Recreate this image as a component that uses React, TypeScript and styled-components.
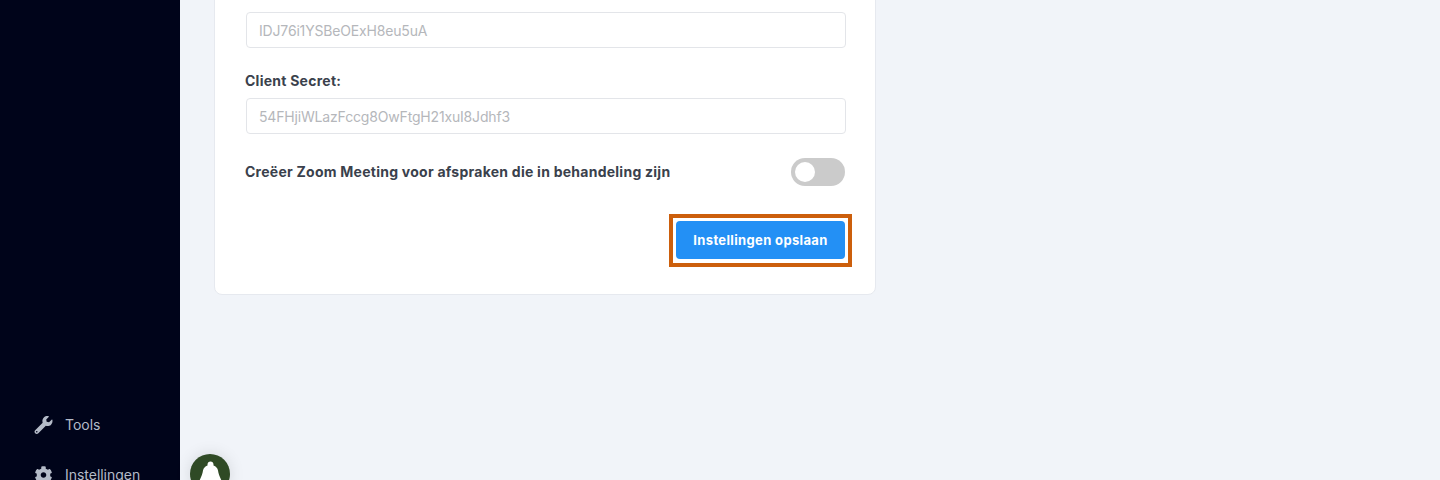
import React from "react";
import styled, { createGlobalStyle } from "styled-components";
import { FaWrench, FaCog } from "react-icons/fa";

const App: React.FC = () => {
  return (
    <Page>
      <GlobalStyle />
      <Sidebar>
        <NavItem>
          <FaWrench size={18} />
          <span>Tools</span>
        </NavItem>
        <NavItem>
          <FaCog size={18} />
          <span>Instellingen</span>
        </NavItem>
      </Sidebar>
      <Main>
        <Card>
          <Field>
            <Label>Client ID:</Label>
            <Input readOnly placeholder="IDJ76i1YSBeOExH8eu5uA" />
          </Field>
          <Field>
            <Label>Client Secret:</Label>
            <Input readOnly placeholder="54FHjiWLazFccg8OwFtgH21xuI8Jdhf3" />
          </Field>
          <ToggleRow>
            <Label as="span">Creëer Zoom Meeting voor afspraken die in behandeling zijn</Label>
            <Toggle>
              <Knob />
            </Toggle>
          </ToggleRow>
          <Actions>
            <Highlight>
              <SaveButton>Instellingen opslaan</SaveButton>
            </Highlight>
          </Actions>
        </Card>
      </Main>
      <BellBadge>
        <svg width="40" height="40" viewBox="0 0 40 40" fill="#fff">
          <path d="M20.5 7.5c1.7 0 3 1.3 3 3v1c2.5 1 4 2.5 4.5 5 .5 3 1.5 6 3.5 10l2.5 4H7l2.5-4c2-4 3-7 3.5-10 .5-2.5 2-4 4.5-5v-1c0-1.7 1.3-3 3-3z" />
        </svg>
      </BellBadge>
    </Page>
  );
};

// Styled Components
const GlobalStyle = createGlobalStyle`
  html, body {
    margin: 0;
    height: 480px;
    overflow: hidden;
    background: #f1f4f9;
    font-family: Inter, "Liberation Sans", sans-serif;
  }
  * {
    box-sizing: border-box;
  }
`;

const Page = styled.div`
  display: flex;
  height: 480px;
  overflow: hidden;
  position: relative;
`;

const Sidebar = styled.aside`
  width: 180px;
  flex-shrink: 0;
  height: 480px;
  background: #00041a;
  display: flex;
  flex-direction: column;
  padding: 415px 0 0 34px;
  gap: 30px;
`;

const NavItem = styled.div`
  display: flex;
  align-items: center;
  gap: 12px;
  height: 20px;
  flex-shrink: 0;
  font-size: 14px;
  letter-spacing: -0.03px;
  color: #b4bbc8;
  span {
    margin-top: -2px;
  }
  svg {
    color: #b4bbc8;
    flex-shrink: 0;
    width: 19px;
  }
`;

const Main = styled.main`
  flex: 1;
  padding-left: 34px;
`;

const Card = styled.div`
  width: 662px;
  margin-top: -16px;
  background: #fff;
  border: 1px solid #e6e9ef;
  border-radius: 8px;
  padding: 0 30px 27px;
  display: flex;
  flex-direction: column;
`;

const Field = styled.div`
  display: flex;
  flex-direction: column;
  gap: 7px;
  margin-bottom: 23px;
`;

const Label = styled.label`
  font-size: 14px;
  line-height: 20px;
  font-weight: 700;
  letter-spacing: 0.25px;
  color: #3a414c;
`;

const Input = styled.input`
  width: 600px;
  height: 36px;
  flex-shrink: 0;
  margin-left: 1px;
  padding: 0 12px;
  font: 14px Inter, "Liberation Sans", sans-serif;
  letter-spacing: -0.17px;
  background: #fff;
  border: 1px solid #e3e5e9;
  border-radius: 4px;
  outline: none;
  &::placeholder {
    color: #b5b7bb;
  }
`;

const ToggleRow = styled.div`
  display: flex;
  align-items: center;
  justify-content: space-between;
  height: 28px;
  margin-top: 1px;
`;

const Toggle = styled.div`
  width: 54px;
  height: 28px;
  border-radius: 14px;
  background: #cbcbcb;
  padding: 4px;
  flex-shrink: 0;
`;

const Knob = styled.div`
  width: 20px;
  height: 20px;
  border-radius: 50%;
  background: #fff;
`;

const Actions = styled.div`
  display: flex;
  justify-content: flex-end;
  margin-top: 28px;
  margin-right: -7px;
`;

const Highlight = styled.div`
  border: 4px solid #cc5f0c;
  padding: 3px 3px 4px;
`;

const SaveButton = styled.button`
  display: block;
  width: 169px;
  height: 38px;
  padding: 0;
  border: none;
  border-radius: 4px;
  background: #2390f5;
  color: #fff;
  font: 700 13px Inter, "Liberation Sans", sans-serif;
  letter-spacing: 0.35px;
`;

const BellBadge = styled.div`
  position: absolute;
  left: 190px;
  top: 454px;
  width: 40px;
  height: 40px;
  border-radius: 50%;
  background: #2f4a25;
  box-shadow: 0 0 16px rgba(0, 0, 0, 0.12);
  svg {
    display: block;
  }
`;

export default App;
